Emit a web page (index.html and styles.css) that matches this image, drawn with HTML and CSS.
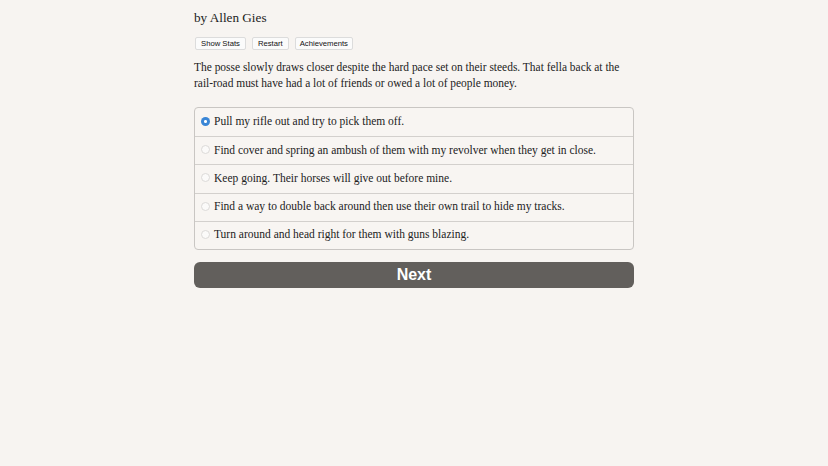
FILE: index.html
```html
<!DOCTYPE html>
<html>
<head>
<meta charset="utf-8">
<link rel="stylesheet" href="styles.css">
</head>
<body>
<div class="page">
  <div class="author">by Allen Gies</div>
  <div class="buttons">
    <button class="small">Show Stats</button>
    <button class="small">Restart</button>
    <button class="small">Achievements</button>
  </div>
  <p class="text">The posse slowly draws closer despite the hard pace set on their steeds. That fella back at the rail-road must have had a lot of friends or owed a lot of people money.</p>
  <div class="choices">
    <label class="choice"><span class="radio checked"></span>Pull my rifle out and try to pick them off.</label>
    <label class="choice"><span class="radio"></span>Find cover and spring an ambush of them with my revolver when they get in close.</label>
    <label class="choice"><span class="radio"></span>Keep going. Their horses will give out before mine.</label>
    <label class="choice"><span class="radio"></span>Find a way to double back around then use their own trail to hide my tracks.</label>
    <label class="choice"><span class="radio"></span>Turn around and head right for them with guns blazing.</label>
  </div>
  <button class="next">Next</button>
</div>
</body>
</html>
```
FILE: styles.css
```css
html, body {
  margin: 0;
  padding: 0;
  background: #f7f4f1;
}
body {
  font-family: "Liberation Serif", "DejaVu Serif", serif;
  color: #222;
}
.page {
  width: 440px;
  margin: 0 auto;
  padding-top: 9px;
}
.author {
  font-size: 13.2px;
  line-height: 18px;
  color: #222;
}
.buttons {
  display: flex;
  gap: 6px;
  margin-top: 10px;
  padding-left: 1px;
}
.small {
  font-family: "Liberation Sans", Arial, sans-serif;
  font-size: 7.7px;
  line-height: 9px;
  padding: 1px 5px;
  background: #fbfbfb;
  border: 1px solid #dcdcdc;
  border-radius: 2px;
  color: #111;
  margin: 0;
}
.small:last-child {
  padding: 1px 4px;
}
.text {
  font-size: 11.45px;
  line-height: 16px;
  margin: 9px 0 0;
}
.choices {
  margin-top: 16px;
  border: 1px solid #c9c6c3;
  border-radius: 4px;
  background: #f8f5f2;
  display: flex;
  flex-direction: column;
}
.choice {
  display: flex;
  align-items: center;
  height: 28.2px;
  box-sizing: border-box;
  padding-left: 6px;
  padding-bottom: 2px;
  font-size: 11.5px;
  border-top: 1px solid #d3d0cd;
}
.choice:first-child {
  border-top: none;
}
.radio {
  width: 9px;
  height: 9px;
  border-radius: 50%;
  border: 1px solid #dcdad8;
  background: #fbfaf9;
  box-sizing: border-box;
  margin-right: 4px;
  flex: none;
}
.radio.checked {
  background: radial-gradient(circle, #ffffff 0 1.3px, #3a86d6 1.6px);
  border: none;
}
.next {
  display: block;
  width: 100%;
  margin-top: 12px;
  height: 26px;
  border: none;
  border-radius: 6px;
  background: #625f5c;
  color: #fff;
  font-family: "Liberation Sans", Arial, sans-serif;
  font-weight: bold;
  font-size: 16px;
  padding: 0;
}
```
